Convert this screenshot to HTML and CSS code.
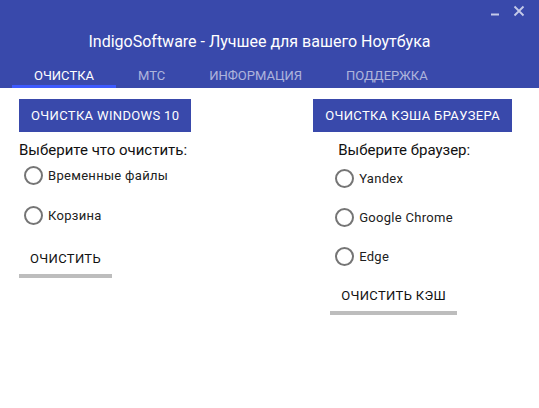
FILE: index.html
```html
<!DOCTYPE html>
<html lang="ru">
<head>
    <meta charset="UTF-8">
    <meta name="viewport" content="width=device-width, initial-scale=1.0">
    <title>IndigoSoftware</title>
    <link rel="stylesheet" href="styles.css">
</head>
<body>
    <div class="window">
        <div class="header">
            <div class="controls">
                <svg class="ctrl" width="12" height="12" viewBox="0 0 12 12"><path d="M2 9.5h8" stroke="#c5cae9" stroke-width="2"/></svg>
                <svg class="ctrl" width="12" height="12" viewBox="0 0 12 12"><path d="M1.5 1.5l9 9M10.5 1.5l-9 9" stroke="#c5cae9" stroke-width="1.8"/></svg>
            </div>
            <div class="title">IndigoSoftware - Лучшее для вашего Ноутбука</div>
            <div class="tabs">
                <div class="tab active">Очистка</div>
                <div class="tab">МТС</div>
                <div class="tab">Информация</div>
                <div class="tab">Поддержка</div>
            </div>
        </div>

        <div class="content">
            <div class="pane pane-left">
                <button class="raised">Очистка Windows 10</button>
                <div class="caption">Выберите что очистить:</div>
                <div class="radios">
                    <label class="radio"><input type="radio" name="clean"><span class="dot"></span>Временные файлы</label>
                    <label class="radio"><input type="radio" name="clean"><span class="dot"></span>Корзина</label>
                </div>
                <button class="flat">Очистить</button>
            </div>

            <div class="pane pane-right">
                <button class="raised">Очистка кэша браузера</button>
                <div class="inner">
                    <div class="caption">Выберите браузер:</div>
                    <div class="radios">
                        <label class="radio"><input type="radio" name="browser"><span class="dot"></span>Yandex</label>
                        <label class="radio"><input type="radio" name="browser"><span class="dot"></span>Google Chrome</label>
                        <label class="radio"><input type="radio" name="browser"><span class="dot"></span>Edge</label>
                    </div>
                    <button class="flat">Очистить кэш</button>
                </div>
            </div>
        </div>
    </div>
</body>
</html>
```

FILE: styles.css
```css
body {
    margin: 0;
    font-family: Roboto, "Noto Sans", Arial, sans-serif;
    background-color: #fff;
    color: #212121;
}
.window {
    width: 539px;
    height: 408px;
    display: flex;
    flex-direction: column;
}
.header {
    background-color: #3949ab;
    height: 88px;
    display: flex;
    flex-direction: column;
    color: #fff;
}
.controls {
    height: 22px;
    display: flex;
    justify-content: flex-end;
    align-items: flex-start;
    gap: 12px;
    padding: 5px 14px 0 0;
    box-sizing: border-box;
}
.title {
    margin-top: 10px;
    padding-right: 20px;
    text-align: center;
    font-size: 16px;
    line-height: 20px;
}
.tabs {
    margin-top: auto;
    display: flex;
    padding-left: 12px;
}
.tab {
    padding: 16px 22px 0;
    height: 36px;
    box-sizing: border-box;
    font-size: 13px;
    line-height: 16px;
    text-transform: uppercase;
    color: rgba(255,255,255,0.6);
    border-bottom: 3px solid transparent;
}
.tab.active {
    color: #fff;
    border-bottom-color: #3d5afe;
}
.content {
    display: flex;
    justify-content: space-between;
    padding: 11px 27px 0 19px;
}
.pane {
    display: flex;
    flex-direction: column;
    align-items: flex-start;
}
button {
    font-family: inherit;
    text-transform: uppercase;
    font-size: 13px;
    letter-spacing: 0.35px;
    cursor: pointer;
}
.raised {
    height: 33px;
    padding: 0 12px;
    border: none;
    background-color: #3949ab;
    color: #fff;
}
.caption {
    margin-top: 8px;
    font-size: 15px;
    line-height: 20px;
    color: #111;
}
.radios {
    display: flex;
    flex-direction: column;
    margin-top: -5px;
}
.radio {
    height: 40px;
    display: flex;
    align-items: center;
    gap: 5px;
    font-size: 13px;
    letter-spacing: 0.3px;
    padding-left: 5px;
}
.radio input {
    display: none;
}
.dot {
    width: 19px;
    height: 19px;
    border: 2px solid #757575;
    border-radius: 50%;
    box-sizing: border-box;
}
.flat {
    margin-top: 8px;
    padding: 8px 11px 7px;
    line-height: 16px;
    background: none;
    border: none;
    border-bottom: 4px solid #bdbdbd;
    color: #111;
}
.inner {
    padding-left: 22px;
    display: flex;
    flex-direction: column;
    align-items: flex-start;
}
.pane-right .caption {
    margin-left: 3px;
}
.pane-right .radios {
    margin-top: -1px;
}
.pane-right .radio {
    height: 39px;
    padding-left: 0;
}
.pane-right .flat {
    margin-top: 4px;
    margin-left: -5px;
}
```
